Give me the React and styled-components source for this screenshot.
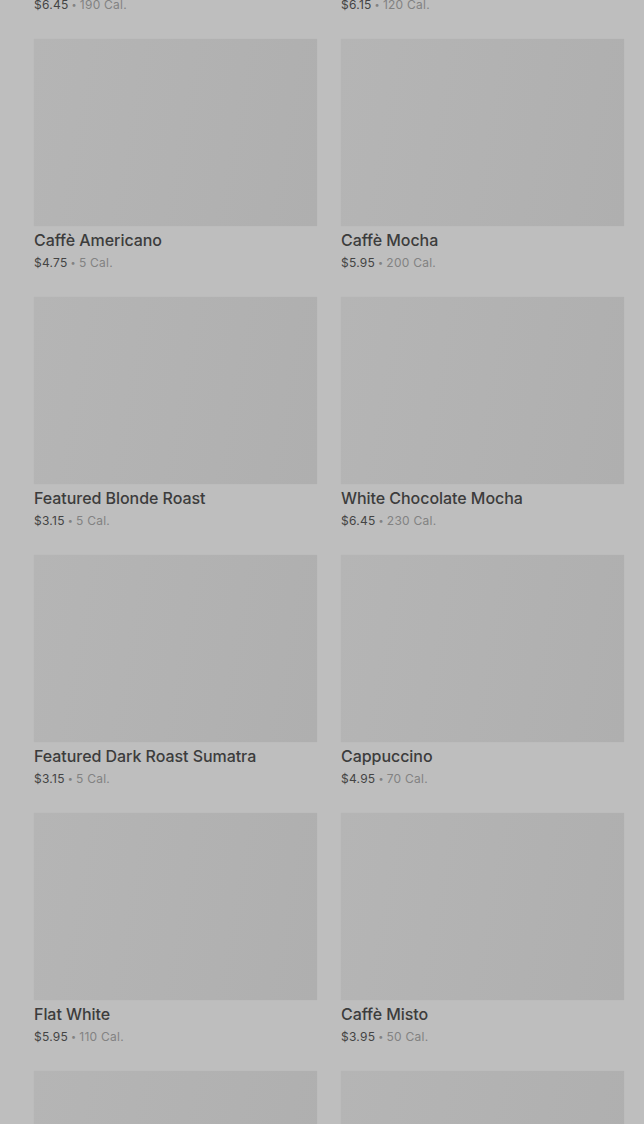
import React from 'react';
import styled, { createGlobalStyle } from 'styled-components';

const GlobalStyle = createGlobalStyle`
    html, body {
        margin: 0;
        padding: 0;
        background: #bebebe;
        overflow: hidden;
    }
    body {
        font-family: Inter, "Noto Sans", "Liberation Sans", sans-serif;
    }
`;

const Page = styled.div`
    height: 1124px;
    overflow: hidden;
    background: #bebebe;
`;

const Grid = styled.div`
    display: grid;
    grid-template-columns: 283px 283px;
    column-gap: 24px;
    row-gap: 24px;
    padding: 0 20px 0 34px;
    margin-top: -219px;
`;

const Card = styled.div`
    display: flex;
    flex-direction: column;
`;

const Thumb = styled.div`
    height: 187px;
    background: linear-gradient(100deg, #b5b5b5 0%, #b2b2b2 50%, #afafaf 100%);
    box-shadow: 0 0 1px rgba(0, 0, 0, 0.06);
`;

const Title = styled.div`
    margin-top: 2px;
    font-size: 16px;
    line-height: 24px;
    font-weight: 500;
    color: #3c3c3c;
    letter-spacing: -0.05px;
`;

const Meta = styled.div`
    margin-top: 1px;
    font-size: 12px;
    line-height: 20px;
    color: #828282;
    letter-spacing: 0.25px;
`;

const Price = styled.span`
    color: #444444;
`;

const Dot = styled.span`
    display: inline-block;
    margin: 0 3px;
    font-size: 9px;
    vertical-align: 1px;
`;

const items = [
    { name: 'Caffè Latte', price: '$6.45', cal: '190 Cal.' },
    { name: 'Cappuccino Grande', price: '$6.15', cal: '120 Cal.' },
    { name: 'Caffè Americano', price: '$4.75', cal: '5 Cal.' },
    { name: 'Caffè Mocha', price: '$5.95', cal: '200 Cal.' },
    { name: 'Featured Blonde Roast', price: '$3.15', cal: '5 Cal.' },
    { name: 'White Chocolate Mocha', price: '$6.45', cal: '230 Cal.' },
    { name: 'Featured Dark Roast Sumatra', price: '$3.15', cal: '5 Cal.' },
    { name: 'Cappuccino', price: '$4.95', cal: '70 Cal.' },
    { name: 'Flat White', price: '$5.95', cal: '110 Cal.' },
    { name: 'Caffè Misto', price: '$3.95', cal: '50 Cal.' },
    { name: 'Caramel Macchiato', price: '$5.95', cal: '250 Cal.' },
    { name: 'Espresso', price: '$2.95', cal: '10 Cal.' },
];

function MenuCard({ item }) {
    return (
        <Card>
            <Thumb />
            <Title>{item.name}</Title>
            <Meta>
                <Price>{item.price}</Price>
                <Dot>•</Dot>
                {item.cal}
            </Meta>
        </Card>
    );
}

export default function App() {
    return (
        <Page>
            <GlobalStyle />
            <Grid>
                {items.map((item, i) => (
                    <MenuCard key={i} item={item} />
                ))}
            </Grid>
        </Page>
    );
}
